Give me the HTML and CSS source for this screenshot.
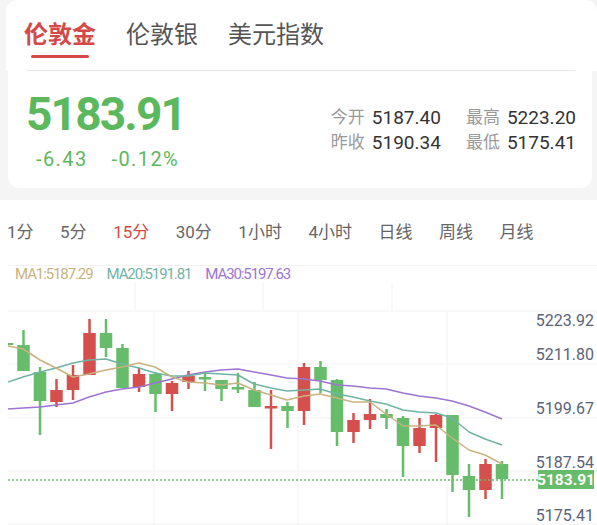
FILE: index.html
```html
<!DOCTYPE html>
<html lang="zh-CN">
<head>
  <meta charset="UTF-8" />
  <meta name="viewport" content="width=device-width, initial-scale=1.0" />
  <title>伦敦金行情</title>
  <link rel="stylesheet" href="styles.css">
</head>
<body>
  <div class="header">
    <div class="tab-row">
      <div class="tab active"><span class="tab-label">伦敦金</span><span class="tab-bar"></span></div>
      <div class="tab"><span class="tab-label">伦敦银</span></div>
      <div class="tab"><span class="tab-label">美元指数</span></div>
    </div>
    <div class="header-line"></div>
  </div>

  <div class="quote">
    <div class="quote-main">
      <div class="price">5183.91</div>
      <div class="change"><span>-6.43</span><span>-0.12%</span></div>
    </div>
    <div class="stats">
      <div class="stat"><span class="stat-label">今开</span><span class="stat-value">5187.40</span></div>
      <div class="stat"><span class="stat-label">最高</span><span class="stat-value">5223.20</span></div>
      <div class="stat"><span class="stat-label">昨收</span><span class="stat-value">5190.34</span></div>
      <div class="stat"><span class="stat-label">最低</span><span class="stat-value">5175.41</span></div>
    </div>
  </div>

  <div class="chart-panel">
    <div class="periods">
      <span>1分</span>
      <span>5分</span>
      <span class="active">15分</span>
      <span>30分</span>
      <span>1小时</span>
      <span>4小时</span>
      <span>日线</span>
      <span>周线</span>
      <span>月线</span>
    </div>
    <div class="ma-legend">
      <span class="ma1">MA1:5187.29</span>
      <span class="ma20">MA20:5191.81</span>
      <span class="ma30">MA30:5197.63</span>
    </div>

    <svg class="kline" width="597" height="243" viewBox="0 282 597 243">
      <defs>
        <clipPath id="plot"><rect x="8" y="282" width="530" height="243" /></clipPath>
      </defs>

      <!-- grid -->
      <g class="grid">
        <line x1="8" y1="311" x2="597" y2="311" />
        <line x1="8" y1="364" x2="597" y2="364" />
        <line x1="8" y1="418" x2="597" y2="418" />
        <line x1="8" y1="471" x2="597" y2="471" />
        <line x1="8" y1="524" x2="597" y2="524" />
        <line x1="135" y1="282" x2="135" y2="311" />
        <line x1="263" y1="282" x2="263" y2="311" />
        <line x1="392" y1="282" x2="392" y2="311" />
        <line x1="154" y1="311" x2="154" y2="525" />
        <line x1="298" y1="311" x2="298" y2="525" />
        <line x1="447" y1="311" x2="447" y2="525" />
      </g>

      <g clip-path="url(#plot)">
        <!-- rising candles -->
        <g class="up">
          <rect x="0.75" y="343" width="12.5" height="2" />
          <line x1="23.5" y1="330" x2="23.5" y2="371" /><rect x="17.25" y="345" width="12.5" height="26" />
          <line x1="40" y1="367" x2="40" y2="435" /><rect x="33.75" y="372" width="12.5" height="29" />
          <line x1="106" y1="319" x2="106" y2="357" /><rect x="99.75" y="333" width="12.5" height="15" />
          <line x1="122.5" y1="344" x2="122.5" y2="388" /><rect x="116.25" y="348" width="12.5" height="40" />
          <line x1="155.5" y1="372" x2="155.5" y2="412" /><rect x="149.25" y="374" width="12.5" height="20" />
          <line x1="205" y1="372" x2="205" y2="391" /><rect x="198.75" y="377" width="12.5" height="2.5" />
          <line x1="221.5" y1="380" x2="221.5" y2="401" /><rect x="215.25" y="380" width="12.5" height="9" />
          <line x1="238" y1="373" x2="238" y2="393" /><rect x="231.75" y="387" width="12.5" height="2.5" />
          <line x1="254.5" y1="382" x2="254.5" y2="407" /><rect x="248.25" y="390" width="12.5" height="17" />
          <line x1="287.5" y1="402" x2="287.5" y2="428" /><rect x="281.25" y="406" width="12.5" height="5" />
          <line x1="320.5" y1="361" x2="320.5" y2="393" /><rect x="314.25" y="367" width="12.5" height="13" />
          <line x1="337" y1="379" x2="337" y2="446" /><rect x="330.75" y="380" width="12.5" height="52" />
          <line x1="386.5" y1="409" x2="386.5" y2="429" /><rect x="380.25" y="414" width="12.5" height="4" />
          <line x1="403" y1="416" x2="403" y2="477" /><rect x="396.75" y="418" width="12.5" height="28" />
          <line x1="452.5" y1="415" x2="452.5" y2="492" /><rect x="446.25" y="415" width="12.5" height="60" />
          <line x1="469" y1="464" x2="469" y2="517" /><rect x="462.75" y="476" width="12.5" height="14" />
          <line x1="502" y1="461" x2="502" y2="499" /><rect x="495.75" y="464" width="12.5" height="15" />
        </g>
        <!-- falling candles -->
        <g class="down">
          <line x1="56.5" y1="379" x2="56.5" y2="407" /><rect x="50.25" y="390" width="12.5" height="12" />
          <line x1="73" y1="365" x2="73" y2="400" /><rect x="66.75" y="375" width="12.5" height="15" />
          <line x1="89.5" y1="319" x2="89.5" y2="375" /><rect x="83.25" y="333" width="12.5" height="42" />
          <line x1="139" y1="368" x2="139" y2="392" /><rect x="132.75" y="374" width="12.5" height="13" />
          <line x1="172" y1="381" x2="172" y2="411" /><rect x="165.75" y="383" width="12.5" height="11" />
          <line x1="188.5" y1="371" x2="188.5" y2="389" /><rect x="182.25" y="376" width="12.5" height="6" />
          <line x1="271" y1="390" x2="271" y2="449" /><rect x="264.75" y="406" width="12.5" height="2.5" />
          <line x1="304" y1="363" x2="304" y2="425" /><rect x="297.75" y="367" width="12.5" height="44" />
          <line x1="353.5" y1="413" x2="353.5" y2="443" /><rect x="347.25" y="420" width="12.5" height="12" />
          <line x1="370" y1="399" x2="370" y2="429" /><rect x="363.75" y="414" width="12.5" height="6" />
          <line x1="419.5" y1="418" x2="419.5" y2="453" /><rect x="413.25" y="428" width="12.5" height="18" />
          <line x1="436" y1="414" x2="436" y2="462" /><rect x="429.75" y="415" width="12.5" height="13" />
          <line x1="485.5" y1="459" x2="485.5" y2="499" /><rect x="479.25" y="464" width="12.5" height="26" />
        </g>

        <!-- moving averages -->
        <polyline class="line-ma30" points="8,409 23,408 40,407 56,405 73,403 89,397 106,392 122,389 139,387 155,383 172,379 188,375 205,372 221,370 238,369 254,372 271,375 287,378 304,379 320,381 337,385 353,386 370,388 386,389 403,393 419,396 436,398 452,401 469,406 485,412 502,419" />
        <polyline class="line-ma20" points="8,382 23,377 40,372 56,368 73,363 89,360 106,359 122,364 139,368 155,373 172,376 188,376 205,373 221,374 238,375 254,384 271,388 287,391 304,390 320,389 337,394 353,397 370,401 386,404 403,410 419,412 436,413 452,418 469,432 485,439 502,445" />
        <polyline class="line-ma1" points="8,346 23,349 40,360 56,368 73,377 89,374 106,370 122,367 139,363 155,367 172,377 188,382 205,383 221,385 238,383 254,390 271,395 287,400 304,396 320,394 337,398 353,402 370,402 386,414 403,426 419,426 436,425 452,438 469,450 485,455 502,464" />
      </g>

      <!-- last price -->
      <line class="last-line" x1="8" y1="480" x2="538" y2="480" />
      <rect class="last-box" x="538" y="470" width="56" height="19" />
      <text class="last-text" x="566" y="480">5183.91</text>

      <!-- price axis -->
      <g class="axis">
        <text x="594" y="320">5223.92</text>
        <text x="594" y="354">5211.80</text>
        <text x="594" y="408">5199.67</text>
        <text x="594" y="462">5187.54</text>
        <text x="594" y="515">5175.41</text>
      </g>
    </svg>
  </div>
</body>
</html>
```

FILE: styles.css
```css
body {
  margin: 0;
  background: #f5f5f5;
  font-family: Roboto, "Noto Sans CJK SC", sans-serif;
  overflow: hidden;
}

/* top tabs */
.header {
  margin-left: 6px;
  background: #fff;
  border-radius: 12px 12px 0 0;
}
.tab-row {
  display: flex;
  gap: 30px;
  height: 52px;
  padding: 18px 0 0 18px;
}
.tab { display: flex; flex-direction: column; align-items: center; }
.tab-label { font-size: 24px; line-height: 34px; color: #555; }
.tab.active .tab-label { color: #d54a46; font-weight: bold; }
.tab-bar {
  width: 58px;
  height: 3px;
  margin-top: 3px;
  border-radius: 2px;
  background: #d54a46;
}
.header-line { height: 1px; margin: 0 22px 0 21px; background: #e6e6e6; }

/* quote card */
.quote {
  box-sizing: border-box;
  height: 117px;
  margin: 0 5px 0 8px;
  padding: 0 16px 0 18px;
  background: #fff;
  border-radius: 0 0 12px 12px;
  display: flex;
  align-items: center;
  justify-content: space-between;
}
.price {
  font-size: 46px;
  line-height: 50px;
  font-weight: bold;
  letter-spacing: -1.8px;
  color: #5cb85c;
}
.change {
  display: flex;
  gap: 24px;
  margin: 8px 0 0 10px;
  font-size: 20px;
  line-height: 24px;
  letter-spacing: 1.4px;
  color: #5cb85c;
}
.stats {
  display: grid;
  grid-template-columns: auto auto;
  column-gap: 25px;
}
.stat { display: flex; gap: 7px; line-height: 25px; }
.stat-label { font-size: 17px; color: #9a9a9a; }
.stat-value { font-size: 19px; color: #333; }

/* chart */
.chart-panel { margin-top: 12px; background: #fff; }
.periods {
  display: flex;
  gap: 26.5px;
  height: 45px;
  padding: 20px 0 0 7px;
  white-space: nowrap;
  overflow: hidden;
  font-size: 17px;
  line-height: 24px;
  color: #666;
}
.periods span { flex-shrink: 0; }
.periods .active { color: #d54a46; }

.ma-legend {
  display: flex;
  gap: 14px;
  margin-left: 8px;
  padding-left: 7px;
  border-top: 1px solid #f2f2f2;
  font-size: 15px;
  line-height: 16px;
  letter-spacing: -1.1px;
}
.ma1 { color: #c8b27f; }
.ma20 { color: #70b3a3; }
.ma30 { color: #9d74d1; }

.kline { display: block; }
.grid line { stroke: #f2f2f2; stroke-width: 1; }
.up { fill: #67bc6b; stroke: #67bc6b; }
.down { fill: #d5504d; stroke: #d5504d; }
.up rect, .down rect { stroke: none; }
.up line, .down line { stroke-width: 2.5; }

.line-ma1, .line-ma20, .line-ma30 { fill: none; stroke-width: 1.5; stroke-linejoin: round; }
.line-ma1 { stroke: #c8b27f; }
.line-ma20 { stroke: #70b3a3; }
.line-ma30 { stroke: #9d74d1; }

.last-line { stroke: #67bc6b; stroke-width: 1.5; stroke-dasharray: 2 2; }
.last-box { fill: #67bc6b; }
.last-text {
  fill: #fff;
  font-size: 15.5px;
  font-weight: bold;
  text-anchor: middle;
  dominant-baseline: central;
}
.axis text {
  fill: #5b6377;
  font-size: 16px;
  text-anchor: end;
  dominant-baseline: central;
}
```
